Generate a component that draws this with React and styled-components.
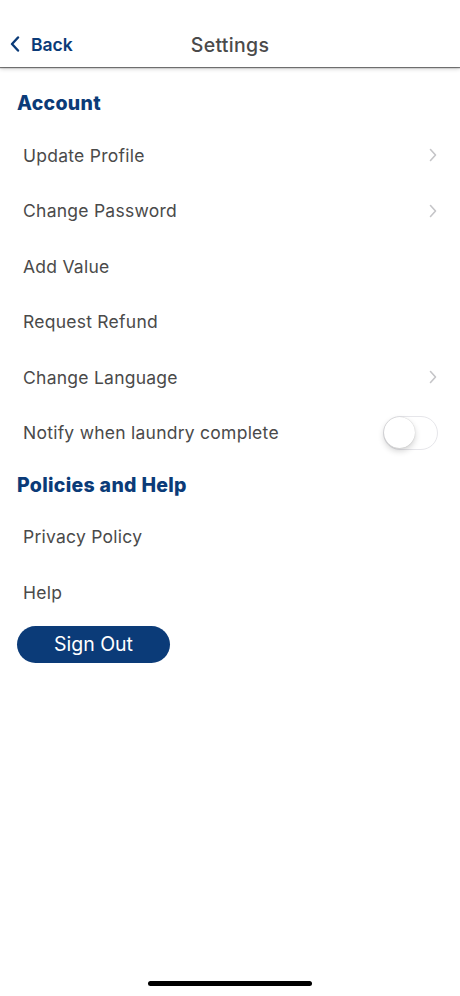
import React, { useState } from "react";
import styled, { createGlobalStyle } from "styled-components";

const Global = createGlobalStyle`
  html, body {
    margin: 0;
    padding: 0;
    background: #ffffff;
  }
  body {
    font-family: "Inter", "Liberation Sans", sans-serif;
    -webkit-font-smoothing: antialiased;
  }
`;

const BLUE = "#0b3b78";
const TEXT = "#4a4a4a";

function App() {
  const [notify, setNotify] = useState(false);

  const account = [
    { label: "Update Profile", arrow: true },
    { label: "Change Password", arrow: true },
    { label: "Add Value" },
    { label: "Request Refund" },
    { label: "Change Language", arrow: true },
  ];

  return (
    <Screen>
      <Global />
      <Header>
        <BackButton>
          <svg width="10" height="16" viewBox="0 0 10 16">
            <path
              d="M8 1.5 L2 8 L8 14.5"
              fill="none"
              stroke={BLUE}
              strokeWidth="2.4"
              strokeLinecap="round"
              strokeLinejoin="round"
            />
          </svg>
          <span>Back</span>
        </BackButton>
        <Title>Settings</Title>
      </Header>

      <Content>
        <SectionTitle>Account</SectionTitle>
        {account.map((item) => (
          <Row key={item.label}>
            <RowLabel>{item.label}</RowLabel>
            {item.arrow && (
              <svg width="8" height="14" viewBox="0 0 8 14">
                <path
                  d="M1.5 1.5 L6.5 7 L1.5 12.5"
                  fill="none"
                  stroke="#c5c5c8"
                  strokeWidth="1.6"
                  strokeLinecap="round"
                  strokeLinejoin="round"
                />
              </svg>
            )}
          </Row>
        ))}
        <Row>
          <RowLabel>Notify when laundry complete</RowLabel>
          <Switch $on={notify} onClick={() => setNotify(!notify)}>
            <Knob $on={notify} />
          </Switch>
        </Row>

        <SectionTitle>Policies and Help</SectionTitle>
        <Row>
          <RowLabel>Privacy Policy</RowLabel>
        </Row>
        <Row>
          <RowLabel>Help</RowLabel>
        </Row>

        <SignOut>Sign Out</SignOut>
      </Content>

      <HomeBar />
    </Screen>
  );
}

export default App;

const Screen = styled.div`
  min-height: 100vh;
  display: flex;
  flex-direction: column;
  background: #fff;
`;

const Header = styled.div`
  height: 67px;
  display: flex;
  align-items: center;
  justify-content: center;
  position: relative;
  box-shadow: 0 1px 1px rgba(0, 0, 0, 0.5), 0 2px 4px rgba(0, 0, 0, 0.18);
  z-index: 2;
`;

const BackButton = styled.div`
  position: absolute;
  left: 10px;
  top: 22px;
  height: 46px;
  display: flex;
  align-items: center;
  gap: 11px;
  color: ${BLUE};
  font-size: 17.5px;
  font-weight: 600;
  span,
  svg {
    margin-top: -2px;
  }
`;

const Title = styled.div`
  margin-top: 22px;
  font-size: 19.5px;
  font-weight: 500;
  color: ${TEXT};
  letter-spacing: 0.3px;
`;

const Content = styled.div`
  padding: 11.75px 23px 0 17px;
  display: flex;
  flex-direction: column;
  align-items: stretch;
`;

const SectionTitle = styled.div`
  height: 48.5px;
  display: flex;
  align-items: center;
  font-size: 19.5px;
  font-weight: 800;
  color: ${BLUE};
  letter-spacing: 0.3px;
`;

const Row = styled.div`
  height: 55.5px;
  display: flex;
  align-items: center;
  justify-content: space-between;
  padding-left: 6px;
`;

const RowLabel = styled.span`
  font-size: 17.5px;
  color: ${TEXT};
  letter-spacing: 0.25px;
`;

const Switch = styled.div`
  width: 55px;
  height: 34px;
  box-sizing: border-box;
  border-radius: 17px;
  border: 1.5px solid #e6e6ea;
  background: ${(p) => (p.$on ? "#34c759" : "#ffffff")};
  display: flex;
  align-items: center;
  justify-content: ${(p) => (p.$on ? "flex-end" : "flex-start")};
  margin-right: -1px;
  cursor: pointer;
`;

const Knob = styled.div`
  width: 31px;
  height: 31px;
  border-radius: 50%;
  background: #fff;
  box-shadow: 0 3px 6px rgba(0, 0, 0, 0.18), 0 0 1px rgba(0, 0, 0, 0.25);
`;

const SignOut = styled.button`
  margin-top: 6px;
  width: 153px;
  height: 37px;
  border: none;
  border-radius: 19px;
  background: ${BLUE};
  color: #fff;
  font-family: inherit;
  font-size: 19.5px;
  font-weight: 400;
  padding: 0;
  cursor: pointer;
`;

const HomeBar = styled.div`
  margin: auto auto 10px;
  width: 164px;
  height: 5px;
  border-radius: 3px;
  background: #000;
`;
